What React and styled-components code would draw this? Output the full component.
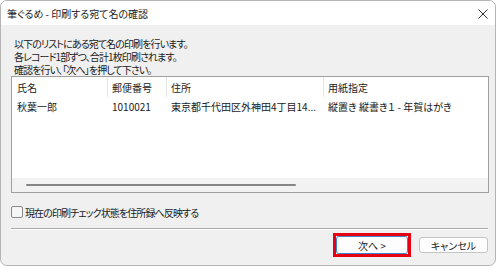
import styled, { createGlobalStyle } from 'styled-components';

const GlobalStyle = createGlobalStyle`
  html, body {
    margin: 0;
    padding: 0;
    background: #ffffff;
  }
  body {
    font-family: "Noto Sans CJK JP", "Noto Sans", sans-serif;
    font-size: 10px;
    color: #1a1a1a;
    font-feature-settings: "palt";
  }
`

const Window = styled.div`
  width: 494px;
  height: 264px;
  border: 1px solid #b4b4b4;
  border-radius: 7px;
  overflow: hidden;
  display: flex;
  flex-direction: column;
  background: #f0f0f0;
`

const TitleBar = styled.div`
  height: 24px;
  flex-shrink: 0;
  background: #ffffff;
  display: flex;
  align-items: center;
  justify-content: space-between;
  padding: 0 4px 0 6px;
`

const Title = styled.span`
  font-size: 10px;
  line-height: 24px;
  padding-top: 2px;
`

const CloseButton = styled.div`
  width: 14px;
  height: 14px;
  display: flex;
  align-items: center;
  justify-content: center;
  margin-right: 1px;
  margin-top: 1px;
`

const Body = styled.div`
  flex: 1;
  display: flex;
  flex-direction: column;
  padding: 12px 6px 0 10px;
`

const Intro = styled.div`
  padding-left: 3px;
  line-height: 13px;
  letter-spacing: -0.9px;
`

const IntroLine = styled.div`
  height: 13px;
`

const ListBox = styled.div`
  height: 115px;
  border: 1px solid #a0a0a0;
  background: #ffffff;
  display: flex;
  flex-direction: column;
`

const Grid = styled.div`
  display: grid;
  grid-template-columns: 96px 59px 157px 1fr;
  height: ${p => p.$h}px;
  align-items: stretch;
`

const HeadCell = styled.div`
  display: flex;
  align-items: center;
  padding-left: ${p => p.$pad}px;
  border-right: ${p => (p.$last ? 'none' : '1px solid #e5e5e5')};
  white-space: nowrap;
`

const Cell = styled.div`
  display: flex;
  align-items: center;
  padding-left: ${p => p.$pad}px;
  white-space: nowrap;
  overflow: hidden;
`

const ListSpacer = styled.div`
  flex: 1;
`

const ScrollTrack = styled.div`
  height: 14px;
  background: #f2f2f2;
  display: flex;
  align-items: center;
  padding-left: 14px;
`

const ScrollThumb = styled.div`
  width: 270px;
  height: 2px;
  border-radius: 1px;
  background: #868686;
`

const CheckRow = styled.label`
  margin-top: 12px;
  height: 14px;
  display: flex;
  align-items: center;
  gap: 2px;
`

const CheckText = styled.span`
  letter-spacing: -0.9px;
`

const CheckBox = styled.span`
  width: 10px;
  height: 10px;
  border: 1px solid #8a8a8a;
  border-radius: 2px;
  background: #f7f7f7;
  flex-shrink: 0;
`

const Separator = styled.div`
  margin-top: 9px;
  height: 1px;
  background: #a8a8a8;
  border-bottom: 1px solid #ffffff;
  margin-right: 1px;
`

const ButtonRow = styled.div`
  margin-top: 3px;
  display: flex;
  justify-content: flex-end;
  align-items: center;
  gap: 8px;
  padding-right: 1px;
`

const Highlight = styled.div`
  border: 3px solid #e60012;
  display: flex;
`

const Button = styled.div`
  width: ${p => p.$w}px;
  height: ${p => p.$h}px;
  box-sizing: border-box;
  border: 1px solid ${p => (p.$primary ? '#3a86d4' : '#c4c4c4')};
  border-radius: 3px;
  background: #fdfdfd;
  display: flex;
  align-items: center;
  justify-content: center;
  font-size: 10px;
  padding-top: 1px;
`

const columns = [
  { head: '氏名', value: '秋葉一郎', pad: 5 },
  { head: '郵便番号', value: '1010021', pad: 4 },
  { head: '住所', value: '東京都千代田区外神田4丁目14...', pad: 4 },
  { head: '用紙指定', value: '縦置き 縦書き１ - 年賀はがき', pad: 4 },
];

const introLines = [
  '以下のリストにある宛て名の印刷を行います。',
  '各レコード1部ずつ、合計1枚印刷されます。',
  '確認を行い、「次へ」を押して下さい。',
];

const App = () => {
  return (
    <>
      <GlobalStyle />
      <Window>
        <TitleBar>
          <Title>筆ぐるめ - 印刷する宛て名の確認</Title>
          <CloseButton>
            <svg width="10" height="10" viewBox="0 0 10 10">
              <path d="M0.5 0.5 L9.5 9.5 M9.5 0.5 L0.5 9.5" stroke="#333" strokeWidth="1" fill="none" />
            </svg>
          </CloseButton>
        </TitleBar>
        <Body>
          <Intro>
            {introLines.map(line => <IntroLine key={line}>{line}</IntroLine>)}
          </Intro>
          <ListBox>
            <Grid $h={20}>
              {columns.map((c, i) => (
                <HeadCell key={c.head} $pad={c.pad} $last={i === columns.length - 1}>{c.head}</HeadCell>
              ))}
            </Grid>
            <Grid $h={18}>
              {columns.map(c => (
                <Cell key={c.head} $pad={c.pad}>{c.value}</Cell>
              ))}
            </Grid>
            <ListSpacer />
            <ScrollTrack>
              <ScrollThumb />
            </ScrollTrack>
          </ListBox>
          <CheckRow>
            <CheckBox />
            <CheckText>現在の印刷チェック状態を住所録へ反映する</CheckText>
          </CheckRow>
          <Separator />
          <ButtonRow>
            <Highlight>
              <Button $primary $w={72} $h={18}>次へ &gt;</Button>
            </Highlight>
            <Button $w={69} $h={16}>キャンセル</Button>
          </ButtonRow>
        </Body>
      </Window>
    </>
  )
}

export default App;
